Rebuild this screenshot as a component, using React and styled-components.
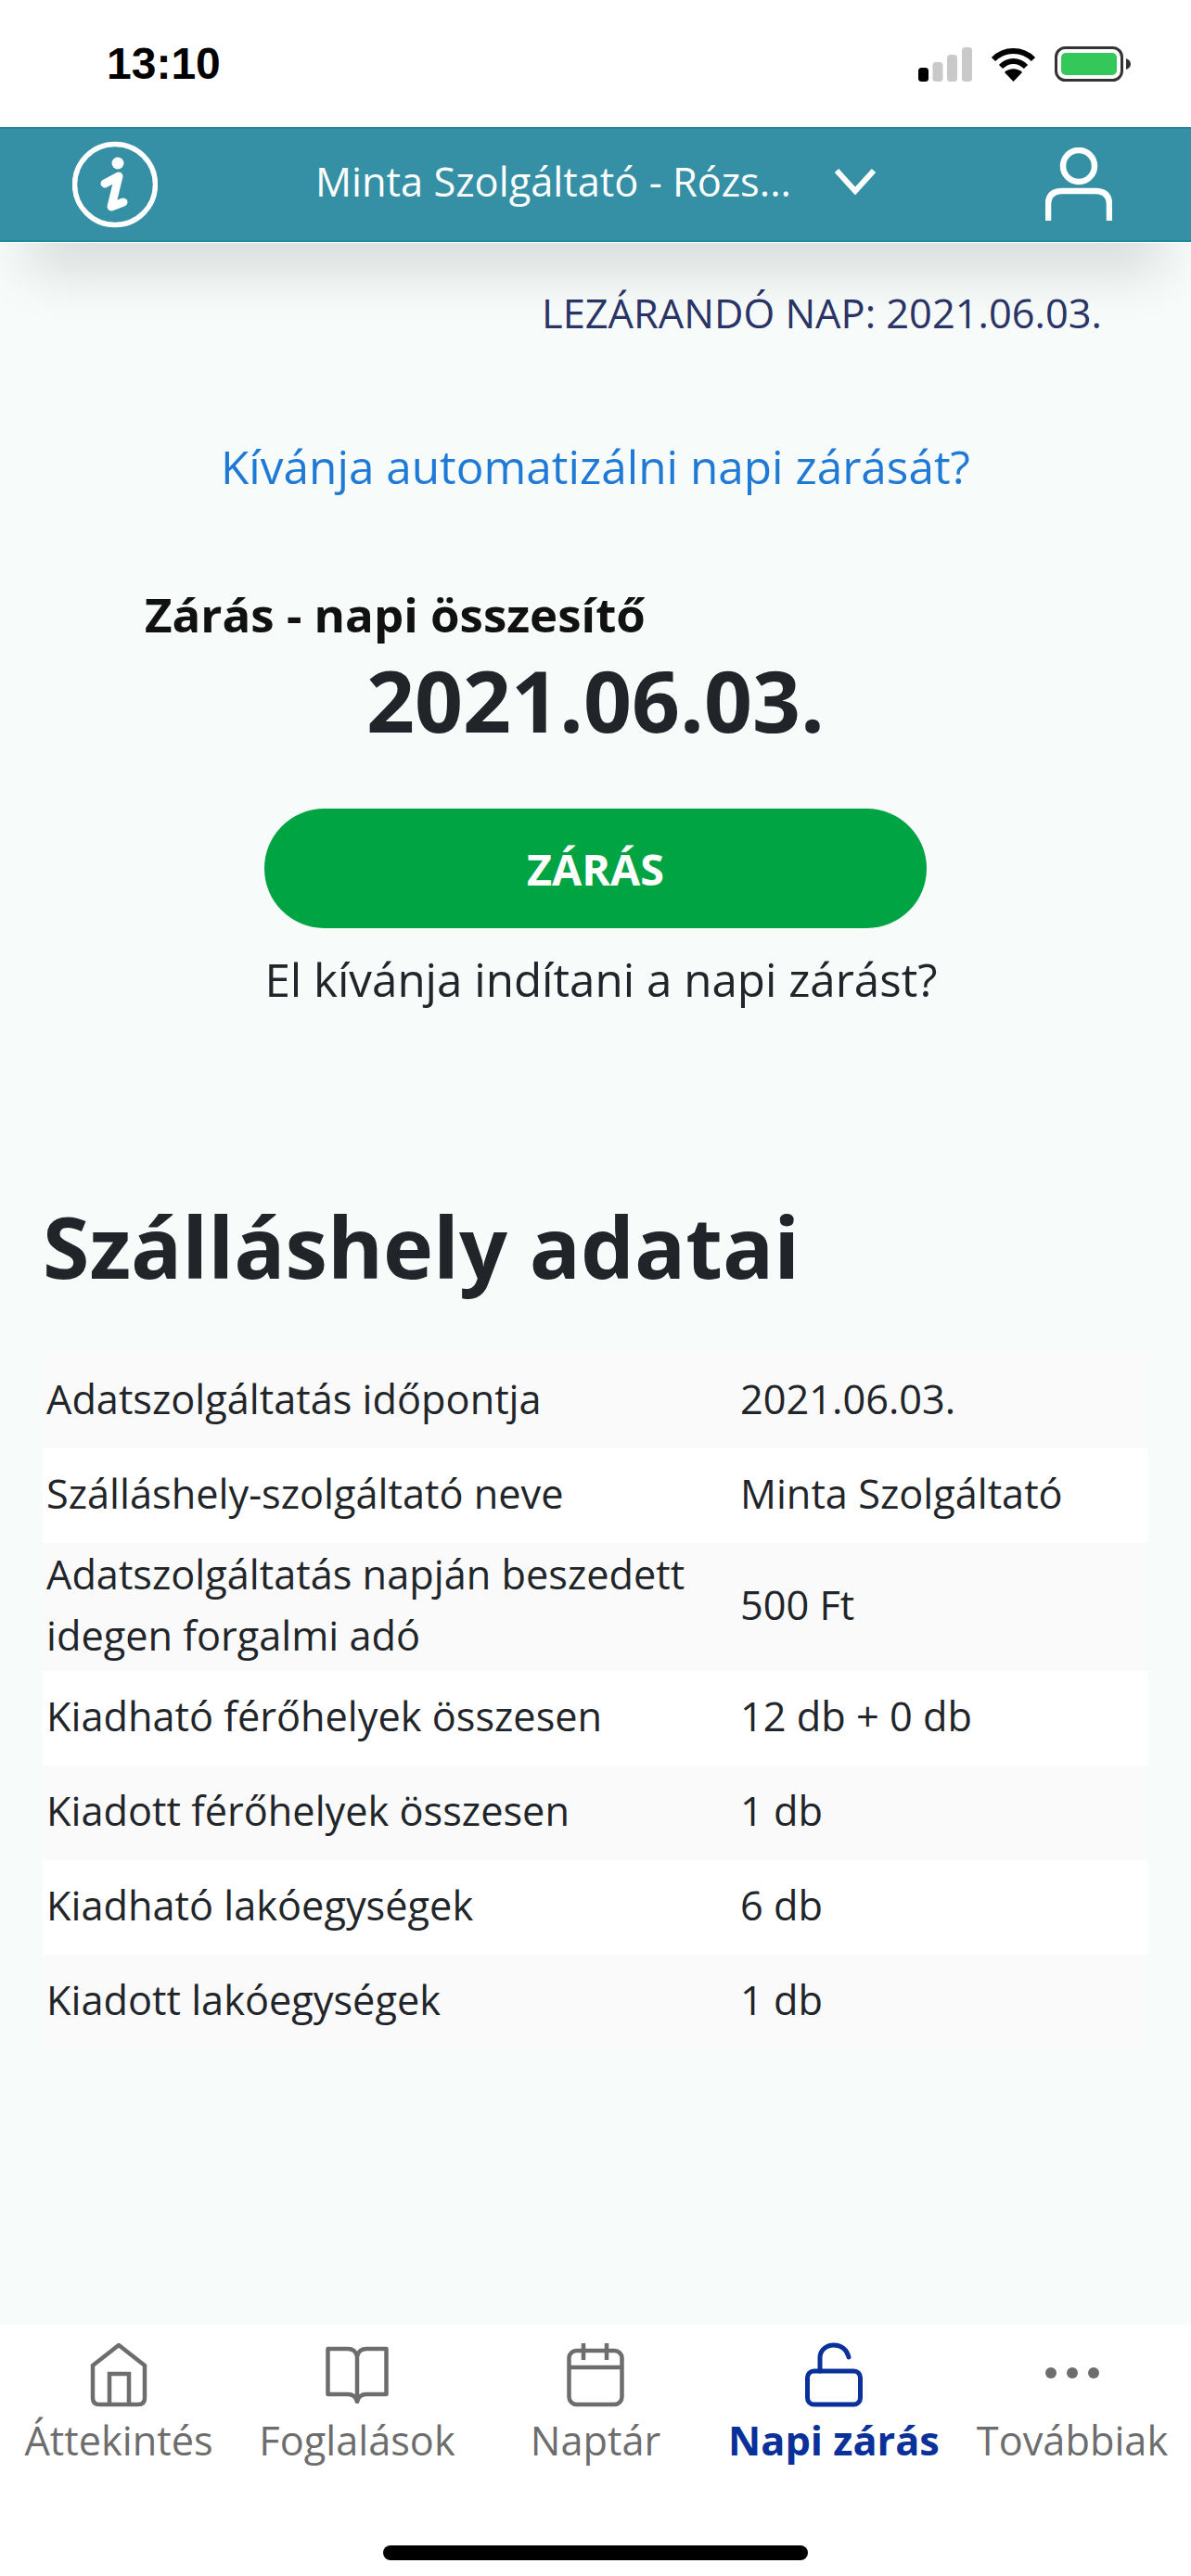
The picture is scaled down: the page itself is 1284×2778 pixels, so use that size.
import React from 'react'
import styled, { createGlobalStyle } from 'styled-components'

const rows = [
  { label: 'Adatszolgáltatás időpontja', value: '2021.06.03.' },
  { label: 'Szálláshely-szolgáltató neve', value: 'Minta Szolgáltató' },
  { label: 'Adatszolgáltatás napján beszedett idegen forgalmi adó', value: '500 Ft' },
  { label: 'Kiadható férőhelyek összesen', value: '12 db + 0 db' },
  { label: 'Kiadott férőhelyek összesen', value: '1 db' },
  { label: 'Kiadható lakóegységek', value: '6 db' },
  { label: 'Kiadott lakóegységek', value: '1 db' },
]

const HomeIcon = () => (
  <svg width="62" height="70" viewBox="0 0 62 70" fill="none" stroke="currentColor" strokeWidth="4.5">
    <path d="M3 25 L31 3 L59 25 V60 Q59 67 52 67 H10 Q3 67 3 60 Z" strokeLinejoin="round" />
    <path d="M21 67 V34 H42 V67" />
  </svg>
)

const BookIcon = () => (
  <svg width="68" height="62" viewBox="0 0 68 62" fill="none" stroke="currentColor" strokeWidth="4.5">
    <path d="M2.5 3 H24 Q32 3 34 11 Q36 3 44 3 H65.5 V52 H44 Q36 52 34 60 Q32 52 24 52 H2.5 Z" strokeLinejoin="round" />
    <path d="M34 11 V60" />
  </svg>
)

const CalendarIcon = () => (
  <svg width="62" height="70" viewBox="0 0 62 70" fill="none" stroke="currentColor" strokeWidth="4.5">
    <rect x="2.5" y="9" width="57" height="58" rx="8" />
    <path d="M3 27 H59 M18 1 V19 M43 1 V19" />
  </svg>
)

const UnlockIcon = () => (
  <svg width="62" height="70" viewBox="0 0 62 70" fill="none" stroke="currentColor" strokeWidth="5">
    <rect x="2.5" y="31" width="57" height="36" rx="7" />
    <path d="M16 31 V17 C16 8 23 3 31 3 C39 3 45 8 47 16" strokeLinecap="round" />
  </svg>
)

const DotsIcon = () => (
  <svg width="58" height="70" viewBox="0 0 58 70" fill="currentColor">
    <circle cx="6" cy="33" r="6" />
    <circle cx="29" cy="33" r="6" />
    <circle cx="52" cy="33" r="6" />
  </svg>
)

const tabs = [
  { label: 'Áttekintés', icon: HomeIcon },
  { label: 'Foglalások', icon: BookIcon },
  { label: 'Naptár', icon: CalendarIcon },
  { label: 'Napi zárás', icon: UnlockIcon, active: true },
  { label: 'Továbbiak', icon: DotsIcon },
]

export default function App() {
  return (
    <Page>
      <GlobalStyle />
      <StatusBar>
        <Clock>13:10</Clock>
        <StatusIcons>
          <svg width="58" height="37" viewBox="0 0 58 37">
            <rect x="0" y="22" width="11" height="15" rx="3.5" fill="#000" />
            <rect x="15.5" y="16" width="11" height="21" rx="3.5" fill="#c9c9c9" />
            <rect x="31" y="8" width="11" height="29" rx="3.5" fill="#c9c9c9" />
            <rect x="47" y="0" width="11" height="37" rx="3.5" fill="#c9c9c9" />
          </svg>
          <svg width="49" height="37" viewBox="0 0 49 37" fill="none" stroke="#000" strokeWidth="6">
            <path d="M3 13 C15 1 34 1 46 13" />
            <path d="M11 21 C19 13 30 13 38 21" />
            <path d="M24.5 37 L15 27 C20 22 29 22 34 27 Z" fill="#000" stroke="none" />
          </svg>
          <svg width="82" height="38" viewBox="0 0 82 38">
            <rect x="1.5" y="1.5" width="71" height="35" rx="10" fill="none" stroke="#333" strokeWidth="3" />
            <rect x="7" y="7" width="60" height="24" rx="5" fill="#34c759" />
            <path d="M77 13 Q82 15 82 19 Q82 23 77 25 Z" fill="#333" />
          </svg>
        </StatusIcons>
      </StatusBar>

      <Header>
        <svg width="92" height="94" viewBox="0 0 92 94" fill="none" stroke="#fff">
          <circle cx="46" cy="47" r="43.5" strokeWidth="5.5" />
          <circle cx="49" cy="24" r="6.5" fill="#fff" stroke="none" />
          <path d="M35 46 L50 38 L42 71 L55 66" strokeWidth="9" strokeLinecap="round" strokeLinejoin="round" />
        </svg>
        <AccountPicker>
          <AccountName>Minta Szolgáltató - Rózs...</AccountName>
          <svg width="46" height="30" viewBox="0 0 46 30" fill="none" stroke="#fff" strokeWidth="6">
            <path d="M3 4 L23 26 L43 4" />
          </svg>
        </AccountPicker>
        <UserIcon width="72" height="80" viewBox="0 0 72 80" fill="none" stroke="#fff" strokeWidth="6.5">
          <circle cx="36" cy="20" r="17" />
          <path d="M3 79 V62 Q3 47 18 47 H54 Q69 47 69 62 V79" />
        </UserIcon>
      </Header>

      <Main>
        <ClosingDay>LEZÁRANDÓ NAP: 2021.06.03.</ClosingDay>
        <AutomateLink>Kívánja automatizálni napi zárását?</AutomateLink>
        <SummaryTitle>Zárás - napi összesítő</SummaryTitle>
        <SummaryDate>2021.06.03.</SummaryDate>
        <CloseButton>ZÁRÁS</CloseButton>
        <Question>El kívánja indítani a napi zárást?</Question>
        <SectionTitle>Szálláshely adatai</SectionTitle>
        <Table>
          {rows.map((row) => (
            <Row key={row.label}>
              <Label>{row.label}</Label>
              <Value>{row.value}</Value>
            </Row>
          ))}
        </Table>
      </Main>

      <TabBar>
        <Tabs>
          {tabs.map((tab) => (
            <Tab key={tab.label} $active={tab.active}>
              <TabIcon>
                <tab.icon />
              </TabIcon>
              <TabLabel $active={tab.active}>{tab.label}</TabLabel>
            </Tab>
          ))}
        </Tabs>
        <HomeIndicator />
      </TabBar>
    </Page>
  )
}

const GlobalStyle = createGlobalStyle`
  * {
    box-sizing: border-box;
  }

  body {
    margin: 0;
    font-family: "Open Sans", sans-serif;
  }
`

const Page = styled.div`
  display: flex;
  flex-direction: column;
  width: 1284px;
  height: 2778px;
  overflow: hidden;
  background: #f7fbfa;
  color: #212529;
`

const StatusBar = styled.div`
  position: relative;
  z-index: 2;
  display: flex;
  justify-content: space-between;
  align-items: flex-start;
  height: 137px;
  padding: 50px 65px 0 115px;
  background: #fff;
`

const Clock = styled.div`
  font-family: "Liberation Sans", sans-serif;
  font-size: 48px;
  font-weight: 700;
  line-height: 38px;
  color: #000;
`

const StatusIcons = styled.div`
  display: flex;
  align-items: flex-end;
  gap: 20px;
`

const Header = styled.header`
  position: relative;
  z-index: 1;
  display: flex;
  align-items: center;
  height: 124px;
  padding: 0 85px 0 78px;
  background: #3590a5;
  border-top: 2px solid #1f8a9e;
  border-bottom: 2px solid #1f8a9e;
  box-shadow: 0 1px 0 #fff, 0 60px 60px -30px rgba(0, 0, 0, 0.14);
`

const AccountPicker = styled.div`
  display: flex;
  align-items: center;
  gap: 46px;
  margin-left: 170px;
  margin-top: -8px;
`

const UserIcon = styled.svg`
  margin-left: auto;
`

const AccountName = styled.div`
  font-size: 43.4px;
  color: #fff;
`

const Main = styled.main`
  flex: 1;
  display: flex;
  flex-direction: column;
  padding: 52px 46px 0;
`

const ClosingDay = styled.div`
  align-self: flex-end;
  margin-right: 50px;
  font-size: 43.4px;
  line-height: 50px;
  color: #2b3467;
`

const AutomateLink = styled.a`
  align-self: center;
  margin-top: 109px;
  font-size: 49.5px;
  line-height: 62px;
  color: #1f7ad6;
`

const SummaryTitle = styled.div`
  margin: 99px 0 0 110px;
  font-size: 51px;
  font-weight: 700;
  line-height: 58px;
  color: #111;
`

const SummaryDate = styled.div`
  align-self: center;
  margin-top: 9px;
  font-size: 91px;
  font-weight: 700;
  line-height: 110px;
`

const CloseButton = styled.button`
  align-self: center;
  width: 714px;
  height: 129px;
  margin-top: 62px;
  border: none;
  border-radius: 65px;
  background: #00a443;
  color: #fff;
  font-family: inherit;
  font-size: 46.7px;
  font-weight: 700;
`

const Question = styled.div`
  align-self: center;
  margin: 26px 0 0 12px;
  font-size: 49.3px;
  line-height: 58px;
  color: #212529;
`

const SectionTitle = styled.h2`
  margin: 204px 0 0;
  font-size: 91.5px;
  font-weight: 700;
  line-height: 110px;
`

const Table = styled.div`
  display: flex;
  flex-direction: column;
  margin-top: 61px;
  width: 1192px;
`

const Row = styled.div`
  display: grid;
  grid-template-columns: 748px 1fr;
  align-items: center;
  min-height: 102px;
  padding: 1px 0 5px 4px;
  background: #fafafa;

  &:nth-child(even) {
    background: #fff;
  }
`

const Label = styled.div`
  padding-right: 30px;
  font-size: 43.3px;
  line-height: 66px;
`

const Value = styled.div`
  font-size: 43.3px;
  line-height: 66px;
`

const TabBar = styled.nav`
  display: flex;
  flex-direction: column;
  align-items: center;
  height: 271px;
  background: #fff;
`

const Tabs = styled.div`
  display: grid;
  grid-template-columns: repeat(5, 257px);
  padding-top: 19px;
`

const Tab = styled.div`
  display: flex;
  flex-direction: column;
  align-items: center;
  color: ${(props) => (props.$active ? '#0a3099' : '#6d6d6d')};
`

const TabIcon = styled.div`
  display: flex;
  align-items: center;
  justify-content: center;
  height: 70px;
`

const TabLabel = styled.div`
  margin-top: 8px;
  font-size: 43.3px;
  font-weight: ${(props) => (props.$active ? 700 : 400)};
  line-height: 56px;
  white-space: nowrap;
`

const HomeIndicator = styled.div`
  width: 458px;
  height: 16px;
  margin-top: 85px;
  border-radius: 8px;
  background: #000;
`
